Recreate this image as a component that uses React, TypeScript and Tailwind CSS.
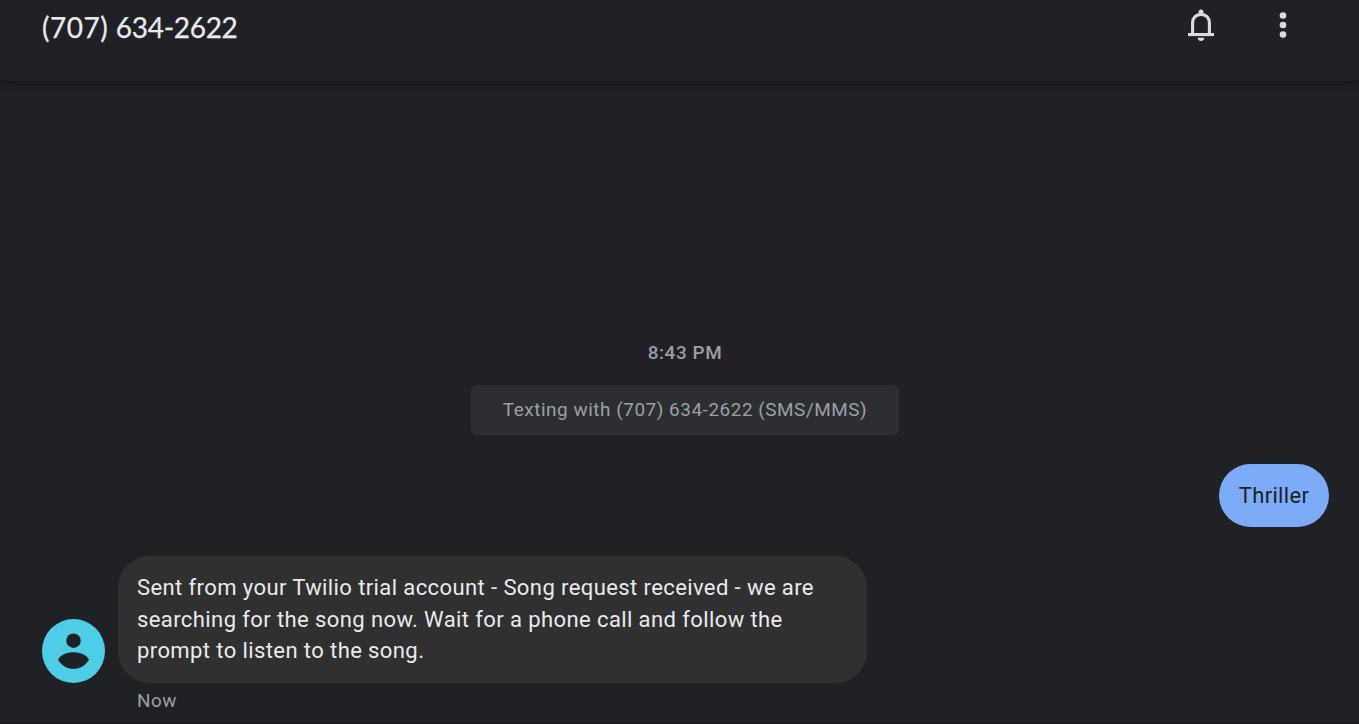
function BellIcon() {
  return (
    <svg className="block h-[34px] w-[28px]" viewBox="0 0 28 34" fill="none" aria-hidden="true">
      <circle cx="14" cy="3.9" r="2.5" fill="#dadce0" />
      <path d="M5.6 26V14.7C5.6 9.8 9.2 6.4 14 6.4S22.4 9.8 22.4 14.7V26" stroke="#dadce0" strokeWidth="3.1" />
      <path d="M1 25H27V28.1H1Z" fill="#dadce0" />
      <path d="M10.7 29.7H17.3C17.3 31.6 16 33 14 33S10.7 31.6 10.7 29.7Z" fill="#dadce0" />
    </svg>
  );
}

function MoreIcon() {
  return (
    <svg className="block h-[34px] w-[10px]" viewBox="0 0 10 34" fill="#dadce0" aria-hidden="true">
      <circle cx="5" cy="7.5" r="3.3" />
      <circle cx="5" cy="17" r="3.3" />
      <circle cx="5" cy="26.5" r="3.3" />
    </svg>
  );
}

function Avatar() {
  return (
    <svg className="block h-16 w-[63px]" viewBox="0 0 63 64" aria-hidden="true">
      <ellipse cx="31.5" cy="32" rx="31.5" ry="32" fill="#4ecde6" />
      <circle cx="31.5" cy="21.7" r="7.2" fill="#202124" />
      <path d="M16 40.7C19 35.5 25 33.3 31.4 33.3S44 35.5 47 40.7C43.5 46.5 38 49.8 31.4 49.8S19.5 46.5 16 40.7Z" fill="#202124" />
    </svg>
  );
}

export default function App() {
  return (
    <div className="flex h-[724px] w-[1359px] flex-col overflow-hidden bg-[#202124] font-['Roboto',sans-serif]">
      <header className="flex h-[81px] shrink-0 items-start justify-between pr-[71px] pl-[42px] shadow-[0_2px_8px_0_rgba(0,0,0,0.42)]">
        <h1 className="pt-[9px] font-['Lato',sans-serif] text-[28px] leading-9 text-[#e8eaed] [-webkit-text-stroke:0.25px_#e8eaed]">
          <span className="tracking-[0.5px]">(707) </span>
          <span className="tracking-[-0.3px]">634-2622</span>
        </h1>
        <div className="flex gap-[63px] pt-2">
          <button aria-label="Notifications"><BellIcon /></button>
          <button aria-label="More options"><MoreIcon /></button>
        </div>
      </header>
      <main className="flex grow flex-col border-b border-[#19191c] pt-[257px] pr-[30px] pl-[42px]">
        <section className="flex flex-col items-center pr-[1px]">
          <time className="text-[18.9px] leading-[30px] font-medium tracking-[0.6px] text-[#9aa0a6]">8:43 PM</time>
          <div className="mt-[17px] flex h-[50px] w-[428px] items-center justify-center rounded-md bg-[#2d2e31] text-[18.9px] tracking-[0.55px] whitespace-nowrap text-[#9aa0a6]">
            Texting with (707) 634-2622 (SMS/MMS)
          </div>
        </section>
        <div className="mt-[29px] flex h-[63px] w-[110px] items-center justify-center self-end rounded-[31.5px] bg-[#7cacf8] text-[22.05px] tracking-[0.315px] text-[#202124]">
          Thriller
        </div>
        <section className="mt-[29px] flex items-end gap-[13px]">
          <Avatar />
          <div className="h-[127px] w-[749px] rounded-[31.5px] bg-[#303030] px-[19px] pt-4 text-[22.05px] leading-[31.5px] tracking-[0.385px] text-[#e8eaed]">
            <p>
              Sent from your Twilio trial account - Song request received - we are<br />
              searching for the song now. Wait for a phone call and follow the<br />
              prompt to listen to the song.
            </p>
          </div>
        </section>
        <time className="mt-1 ml-[95px] text-[18.9px] leading-7 tracking-[0.55px] text-[#9aa0a6]">Now</time>
      </main>
    </div>
  );
}
